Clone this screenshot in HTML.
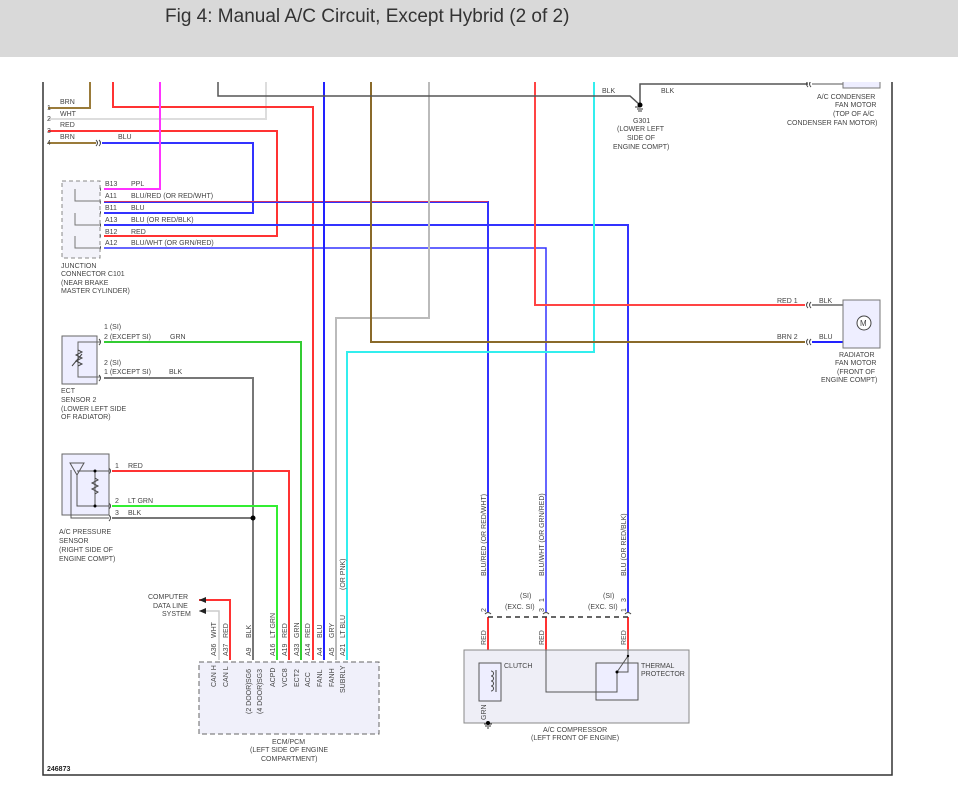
<!DOCTYPE html>
<html><head><meta charset="utf-8"><style>
body{margin:0;width:958px;height:789px;background:#fff;overflow:hidden;font-family:"Liberation Sans",sans-serif}
.hdr{position:absolute;left:0;top:0;width:958px;height:57px;background:#d9d9d9}
.hdr div{position:absolute;left:165px;top:6px;font-size:19px;color:#333}
svg{position:absolute;left:0;top:0}
text{font-family:"Liberation Sans",sans-serif;font-size:7px;fill:#444}
</style></head><body>
<div class="hdr"><div>Fig 4: Manual A/C Circuit, Except Hybrid (2 of 2)</div></div>
<svg width="958" height="789" viewBox="0 0 958 789">
<g fill="none" stroke-width="2">
<path d="M43 82V775H892V82" stroke="#333" stroke-width="1.5"/>
<path d="M48 108H90V82" stroke="#9a7b3a"/>
<path d="M48 119H266V82" stroke="#ddd"/>
<path d="M113 82V107H313V660" stroke="#f33"/>
<path d="M48 131H277V236H104" stroke="#f33"/>
<path d="M48 143H96" stroke="#9a7b3a"/>
<path d="M102 143H253V213H104" stroke="#33f"/>
<path d="M160 82V189H104" stroke="#f3f"/>
<path d="M104 202H488V612" stroke="#33f"/>
<path d="M104 201.5H488" stroke="#f33" stroke-width="0.8"/>
<path d="M104 225H628V612" stroke="#33f"/>
<path d="M104 248H546V612" stroke="#33f" stroke-width="1.5"/>
<path d="M324 82V660" stroke="#22f"/>
<path d="M429 82V318H336V660" stroke="#bbb"/>
<path d="M594 82V352H347V660" stroke="#3ee"/>
<path d="M371 82V342H805" stroke="#8a6a2a"/>
<path d="M535 82V305H805" stroke="#f44"/>
<path d="M218 82V96H630L640 105" stroke="#555" stroke-width="1.5"/>
<path d="M640 103V84H808" stroke="#555" stroke-width="1.5"/>
<path d="M812 84H850V82" stroke="#555" stroke-width="1"/>
<path d="M104 342H301V660" stroke="#3c3"/>
<path d="M104 378H253V660" stroke="#777"/>
<path d="M112 471H289V660" stroke="#f33"/>
<path d="M112 506H277V660" stroke="#3e3"/>
<path d="M112 518H253" stroke="#777"/>
<path d="M199 600H230V660" stroke="#f33"/>
<path d="M199 611H219V660" stroke="#ccc" stroke-width="1.5"/>
<path d="M812 305H850V316" stroke="#666" stroke-width="1.5"/>
<path d="M812 342H843" stroke="#22f"/>
<path d="M488 617V650M546 617V650M628 617V650" stroke="#f33"/>
<path d="M488 617V712" stroke="#f33" stroke-width="1.5"/>
<path d="M488 700V724" stroke="#3b3"/>
</g>
<g fill="none" stroke="#444" stroke-width="1">
<path d="M96 140q3 3 0 6M99 140q3 3 0 6"/>
<path d="M99 186q3 3 0 6M99 199q3 3 0 6M99 210q3 3 0 6M99 222q3 3 0 6M99 233q3 3 0 6M99 245q3 3 0 6"/>
<path d="M99 339q3 3 0 6M99 375q3 3 0 6M109 468q3 3 0 6M109 503q3 3 0 6M109 515q3 3 0 6"/>
<path d="M808 302q-3 3 0 6M811 302q-3 3 0 6M808 339q-3 3 0 6M811 339q-3 3 0 6M808 81q-3 3 0 6M811 81q-3 3 0 6"/>
<path d="M485 614q3 -3 6 0M543 614q3 -3 6 0M625 614q3 -3 6 0"/>
</g>
<rect x="62" y="181" width="38" height="77" fill="#f3f3fa" stroke="#888" stroke-dasharray="4 3"/>
<path d="M75 189V201H100M75 213V225H100M75 236V248H100" fill="none" stroke="#777"/>
<rect x="62" y="336" width="35" height="48" fill="#eef" stroke="#666"/>
<path d="M100 342H78V377H100" fill="none" stroke="#666"/>
<path d="M78 350l4 2-6 3 6 3-6 3 6 3-4 2M72 366l10-12" fill="none" stroke="#444"/>
<rect x="62" y="454" width="47" height="61" fill="#eef" stroke="#666"/>
<path d="M70 463h14l-7 12zM77 475v31h32M77 471h32M95 471v35M71 470v48h38" fill="none" stroke="#555"/>
<path d="M95 478l3 2-6 3 6 3-6 3 6 3-3 2" fill="none" stroke="#444"/>
<circle cx="95" cy="471" r="1.5"/><circle cx="95" cy="506" r="1.5"/><circle cx="253" cy="518" r="2.5"/>
<rect x="199" y="662" width="180" height="72" fill="#f0f0fa" stroke="#666" stroke-dasharray="5 3"/>
<rect x="464" y="650" width="225" height="73" fill="#eeeef6" stroke="#888"/>
<rect x="479" y="663" width="22" height="38" fill="#eef" stroke="#555"/>
<path d="M491 671a2 2 0 010 5a2 2 0 010 5a2 2 0 010 5a2 2 0 010 5M496 670v22" fill="none" stroke="#444"/>
<rect x="596" y="663" width="42" height="37" fill="#eef" stroke="#555"/>
<path d="M546 650V692H617V672H628V650M617 672L628 656" fill="none" stroke="#555"/>
<circle cx="617" cy="672" r="1.5"/><circle cx="628" cy="656" r="1.2"/>
<path d="M488 617H628" stroke="#333" stroke-width="1.5" stroke-dasharray="5 4"/>
<rect x="843" y="300" width="37" height="48" fill="#eef" stroke="#777"/>
<circle cx="864" cy="323" r="7" fill="#fff" stroke="#444"/><text x="860" y="326" style="font-size:8px">M</text>
<rect x="843" y="74" width="37" height="14" fill="#eef" stroke="#777"/>
<rect x="0" y="57" width="958" height="25" fill="#fff"/>
<path d="M640 107h-5M637 109h6M638 111h4" stroke="#333"/><circle cx="640" cy="105" r="2.5"/>
<path d="M484 724h8M485 726h6M487 728h2" stroke="#333"/><circle cx="488" cy="723" r="2"/>
<path d="M199 600l7-3v6zM199 611l7-3v6z" fill="#222"/>
<text x="47" y="110">1</text><text x="60" y="104">BRN</text>
<text x="47" y="121">2</text><text x="60" y="116">WHT</text>
<text x="47" y="133">3</text><text x="60" y="127">RED</text>
<text x="47" y="145">4</text><text x="60" y="139">BRN</text><text x="118" y="139">BLU</text>
<text x="105" y="186">B13</text><text x="131" y="186">PPL</text>
<text x="105" y="198">A11</text><text x="131" y="198">BLU/RED (OR RED/WHT)</text>
<text x="105" y="210">B11</text><text x="131" y="210">BLU</text>
<text x="105" y="222">A13</text><text x="131" y="222">BLU (OR RED/BLK)</text>
<text x="105" y="234">B12</text><text x="131" y="234">RED</text>
<text x="105" y="245">A12</text><text x="131" y="245">BLU/WHT (OR GRN/RED)</text>
<text x="61" y="268">JUNCTION</text><text x="61" y="276">CONNECTOR C101</text><text x="61" y="285">(NEAR BRAKE</text><text x="61" y="293">MASTER CYLINDER)</text>
<text x="104" y="329">1  (SI)</text><text x="104" y="339">2  (EXCEPT SI)</text><text x="170" y="339">GRN</text>
<text x="104" y="365">2  (SI)</text><text x="104" y="374">1  (EXCEPT SI)</text><text x="169" y="374">BLK</text>
<text x="61" y="393">ECT</text><text x="61" y="402">SENSOR 2</text><text x="61" y="411">(LOWER LEFT SIDE</text><text x="61" y="419">OF RADIATOR)</text>
<text x="115" y="468">1</text><text x="128" y="468">RED</text>
<text x="115" y="503">2</text><text x="128" y="503">LT GRN</text>
<text x="115" y="515">3</text><text x="128" y="515">BLK</text>
<text x="59" y="534">A/C PRESSURE</text><text x="59" y="543">SENSOR</text><text x="59" y="552">(RIGHT SIDE OF</text><text x="59" y="561">ENGINE COMPT)</text>
<text x="148" y="599">COMPUTER</text><text x="153" y="608">DATA LINE</text><text x="162" y="616">SYSTEM</text>
<g transform="rotate(-90)">
<text x="-638" y="216">WHT</text><text x="-638" y="228">RED</text><text x="-638" y="251">BLK</text>
<text x="-638" y="275">LT GRN</text><text x="-638" y="287">RED</text><text x="-638" y="299">GRN</text><text x="-638" y="310">RED</text><text x="-638" y="322">BLU</text><text x="-638" y="334">GRY</text><text x="-638" y="345">LT BLU</text><text x="-590" y="345">(OR PNK)</text>
<text x="-656" y="216">A36</text><text x="-656" y="228">A37</text><text x="-656" y="251">A9</text><text x="-656" y="275">A16</text><text x="-656" y="287">A19</text><text x="-656" y="299">A33</text><text x="-656" y="310">A14</text><text x="-656" y="322">A4</text><text x="-656" y="334">A5</text><text x="-656" y="345">A21</text>
<text x="-687" y="216">CAN H</text><text x="-687" y="228">CAN L</text><text x="-683" y="251">SG6</text><text x="-683" y="262">SG3</text><text x="-714" y="251">(2 DOOR)</text><text x="-714" y="262">(4 DOOR)</text>
<text x="-687" y="275">ACPD</text><text x="-687" y="287">VCC8</text><text x="-687" y="299">ECT2</text><text x="-687" y="310">ACC</text><text x="-687" y="322">FANL</text><text x="-687" y="334">FANH</text><text x="-693" y="345">SUBRLY</text>
<text x="-576" y="486">BLU/RED (OR RED/WHT)</text><text x="-576" y="544">BLU/WHT (OR GRN/RED)</text><text x="-576" y="626">BLU (OR RED/BLK)</text>
<text x="-612" y="486">2</text><text x="-602" y="544">1</text><text x="-612" y="544">3</text><text x="-602" y="626">3</text><text x="-612" y="626">1</text>
<text x="-645" y="486">RED</text><text x="-645" y="544">RED</text><text x="-645" y="626">RED</text><text x="-720" y="486">GRN</text>
</g>
<text x="272" y="744">ECM/PCM</text><text x="250" y="752">(LEFT SIDE OF ENGINE</text><text x="261" y="761">COMPARTMENT)</text>
<text x="520" y="598">(SI)</text><text x="505" y="609">(EXC. SI)</text>
<text x="603" y="598">(SI)</text><text x="588" y="609">(EXC. SI)</text>
<text x="504" y="668">CLUTCH</text><text x="641" y="668">THERMAL</text><text x="641" y="676">PROTECTOR</text>
<text x="543" y="732">A/C COMPRESSOR</text><text x="531" y="740">(LEFT FRONT OF ENGINE)</text>
<text x="602" y="93">BLK</text><text x="661" y="93">BLK</text>
<text x="633" y="123">G301</text><text x="617" y="131">(LOWER LEFT</text><text x="627" y="140">SIDE OF</text><text x="613" y="149">ENGINE COMPT)</text>
<text x="817" y="99">A/C CONDENSER</text><text x="835" y="107">FAN MOTOR</text><text x="833" y="116">(TOP OF A/C</text><text x="787" y="125">CONDENSER FAN MOTOR)</text>
<text x="777" y="303">RED  1</text><text x="819" y="303">BLK</text>
<text x="777" y="339">BRN  2</text><text x="819" y="339">BLU</text>
<text x="839" y="357">RADIATOR</text><text x="835" y="365">FAN MOTOR</text><text x="837" y="374">(FRONT OF</text><text x="821" y="382">ENGINE COMPT)</text>
<text x="47" y="771" style="font-weight:bold;fill:#222">246873</text>
</svg>
</body></html>
